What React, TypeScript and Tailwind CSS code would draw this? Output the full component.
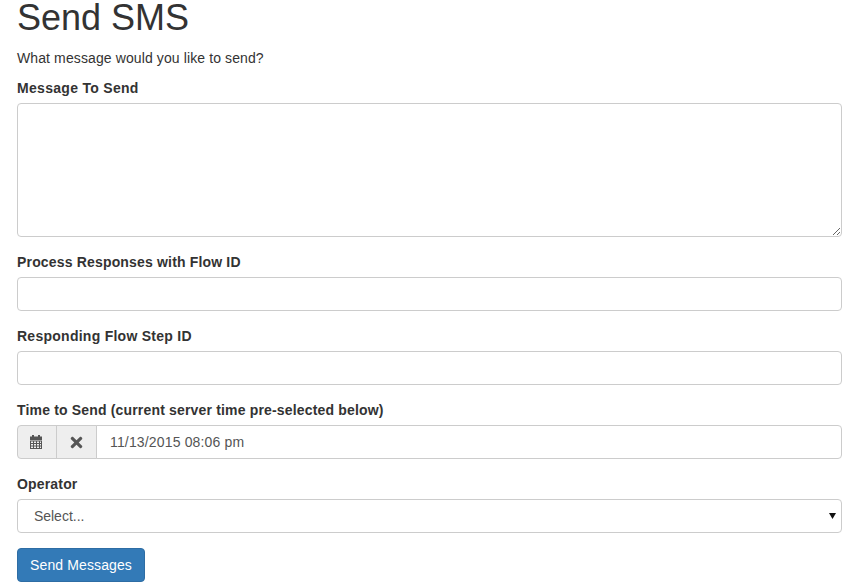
import { FaTimes } from "react-icons/fa";

const labelClass = "block mb-[5px] text-[14px] leading-[20px] font-bold text-[#333]";
const inputClass =
  "block w-full h-[34px] px-3 text-[14px] text-[#555] bg-white border border-[#ccc] rounded outline-none";

function CalendarIcon() {
  return (
    <svg className="w-[14px] h-[15px] mr-[2px]" viewBox="0 0 14 15" fill="#555">
      <rect x="3" y="0" width="2" height="3" />
      <rect x="9" y="0" width="2" height="3" />
      <rect x="1" y="1.5" width="12" height="3.5" />
      <path
        fillRule="evenodd"
        d="M1 5.5h12V14H1z M2 6.5v1.5h2V6.5z M5 6.5v1.5h2V6.5z M8 6.5v1.5h2V6.5z M11 6.5v1.5h1V6.5z M2 9v1.5h2V9z M5 9v1.5h2V9z M8 9v1.5h2V9z M11 9v1.5h1V9z M2 11.5V13h2v-1.5z M5 11.5V13h2v-1.5z M8 11.5V13h2v-1.5z M11 11.5V13h1v-1.5z"
      />
    </svg>
  );
}

export default function App() {
  return (
    <div className="w-[851px] h-[586px] overflow-hidden bg-white pl-[17px] pr-[9px] font-['Liberation_Sans',Arial,sans-serif] text-[14px] text-[#333]">
      <h1 className="text-[36px] leading-[36px] font-normal mb-[12px]">Send SMS</h1>
      <p className="leading-[20px] tracking-[0.11px] mb-[10px]">What message would you like to send?</p>

      <div className="mb-[15px]">
        <label className={`${labelClass} tracking-[0.3px]`}>Message To Send</label>
        <textarea className="block w-full h-[134px] px-3 py-[6px] text-[14px] text-[#555] bg-white border border-[#ccc] rounded outline-none" />
      </div>

      <div className="mb-[15px]">
        <label className={`${labelClass} tracking-[0.17px]`}>Process Responses with Flow ID</label>
        <input className={inputClass} />
      </div>

      <div className="mb-[15px]">
        <label className={`${labelClass} tracking-[0.26px]`}>Responding Flow Step ID</label>
        <input className={inputClass} />
      </div>

      <div className="mb-[15px]">
        <label className={`${labelClass} tracking-[0.17px]`}>Time to Send (current server time pre-selected below)</label>
        <div className="flex h-[34px]">
          <span className="flex w-[40px] items-center justify-center bg-[#eee] border border-[#ccc] rounded-l">
            <CalendarIcon />
          </span>
          <span className="flex w-[41px] -ml-px items-center justify-center bg-[#eee] border border-[#ccc] text-[#555]">
            <FaTimes className="w-[17px] h-[17px]" />
          </span>
          <input
            readOnly
            value="11/13/2015 08:06 pm"
            className="flex-1 min-w-0 -ml-px h-[34px] pl-[13px] pr-3 text-[14px] tracking-[0.16px] text-[#555] bg-white border border-[#ccc] rounded-r outline-none"
          />
        </div>
      </div>

      <div className="mb-[15px]">
        <label className={`${labelClass} tracking-[0.17px]`}>Operator</label>
        <div className="relative">
          <select className="block w-full h-[34px] pl-3 pr-6 text-[14px] text-[#555] bg-white border border-[#ccc] rounded outline-none appearance-none">
            <option>&nbsp;Select...</option>
          </select>
          <svg className="absolute right-[6px] top-[14px] w-[7px] h-[6px] pointer-events-none" viewBox="0 0 7 6">
            <path d="M0 0h7L3.5 6z" fill="#111" />
          </svg>
        </div>
      </div>

      <button className="block h-[34px] w-[128px] text-[14px] tracking-[0.12px] text-white bg-[#337ab7] border border-[#2e6da4] rounded">
        Send Messages
      </button>
    </div>
  );
}
